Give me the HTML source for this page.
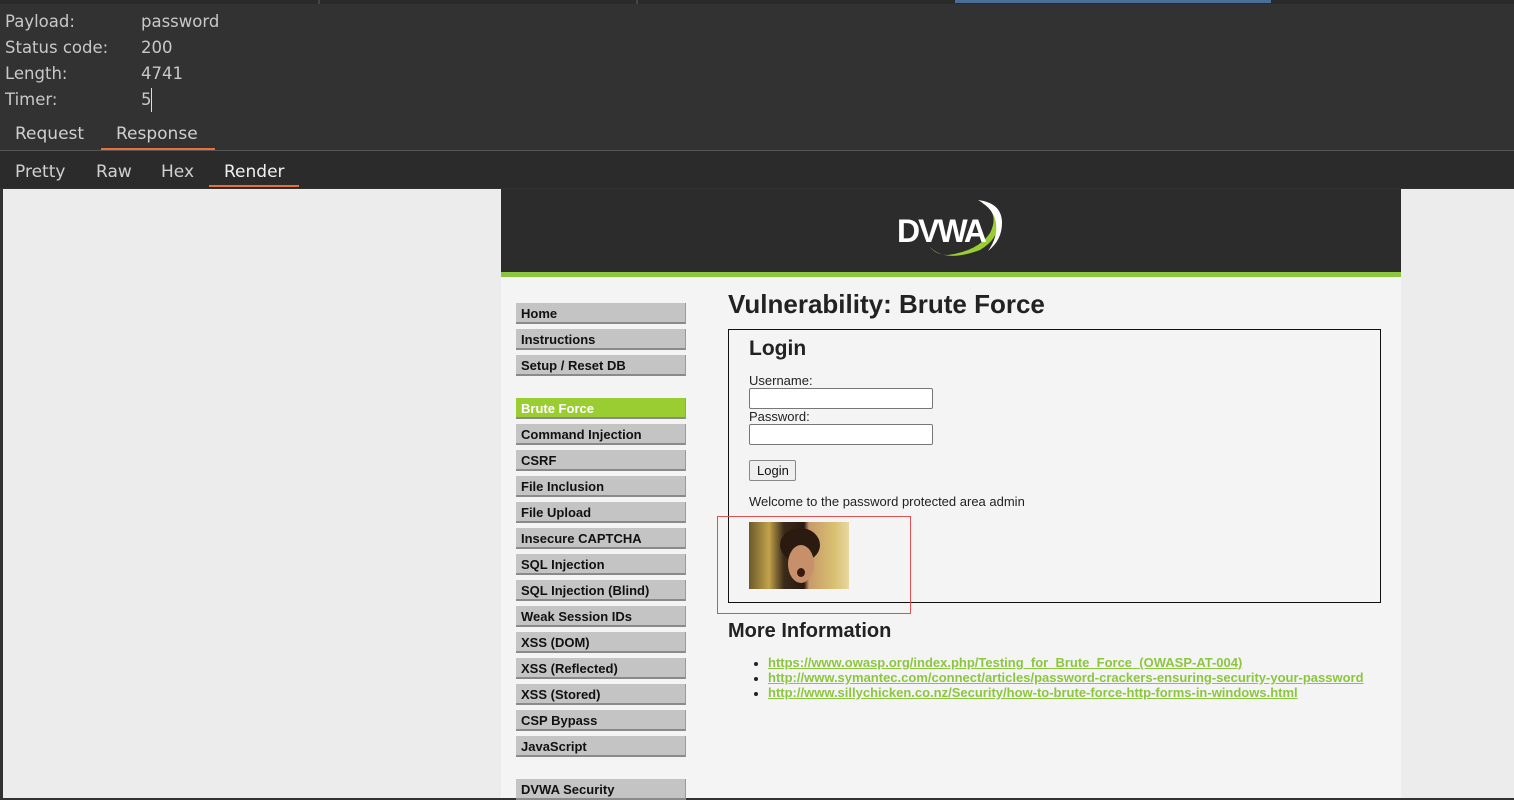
<!DOCTYPE html>
<html><head><style>
*{margin:0;padding:0;box-sizing:border-box}
body{width:1514px;height:798px;overflow:hidden;background:#323232;font-family:"DejaVu Sans","Liberation Sans",sans-serif;position:relative}
.a{position:absolute}
.lbl{color:#c8c8c8;font-size:16.5px;position:absolute}
.tab{position:absolute;color:#d0d0d0;font-size:17px}
.menu{position:absolute;left:516px;width:170px;height:21px;background:#c4c4c4;border-bottom:2px solid #8a8a8a;border-right:1px solid #999;font:bold 13px "Liberation Sans",sans-serif;color:#111;padding:3px 0 0 5px}
.ds{font-family:"Liberation Sans",sans-serif}
a{color:#8cc63f;font:bold 13px/15px "Liberation Sans",sans-serif;text-decoration:underline}
li{line-height:15px;height:15px}
input{position:absolute;height:21px;width:184px;border:1px solid #777;border-radius:2px;background:#fff}
</style></head><body>
<div class="a" style="left:0;top:0;width:1514px;height:4px;background:#2a2a2a"></div>
<div class="a" style="left:318px;top:0;width:2px;height:4px;background:#444"></div>
<div class="a" style="left:636px;top:0;width:2px;height:4px;background:#444"></div>
<div class="a" style="left:955px;top:0;width:316px;height:3px;background:#4a6f96"></div>
<div class="lbl" style="left:5px;top:12px">Payload:</div><div class="lbl" style="left:141px;top:12px">password</div>
<div class="lbl" style="left:5px;top:38px">Status code:</div><div class="lbl" style="left:141px;top:38px">200</div>
<div class="lbl" style="left:5px;top:64px">Length:</div><div class="lbl" style="left:141px;top:64px">4741</div>
<div class="lbl" style="left:5px;top:90px">Timer:</div><div class="lbl" style="left:141px;top:90px">5</div>
<div class="a" style="left:151px;top:88px;width:1px;height:24px;background:#ddd"></div>
<div class="tab" style="left:15px;top:124px">Request</div>
<div class="tab" style="left:116px;top:124px">Response</div>
<div class="a" style="left:101px;top:148px;width:114px;height:2px;background:#e8703a"></div>
<div class="a" style="left:0;top:150px;width:1514px;height:1px;background:#555"></div>
<div class="a" style="left:0;top:151px;width:1514px;height:37px;background:#2b2b2b"></div>
<div class="tab" style="left:15px;top:162px">Pretty</div>
<div class="tab" style="left:96px;top:162px">Raw</div>
<div class="tab" style="left:161px;top:162px">Hex</div>
<div class="tab" style="left:224px;top:162px;color:#f0f0f0">Render</div>
<div class="a" style="left:209px;top:185px;width:90px;height:2px;background:#e8703a"></div>
<div class="a" style="left:3px;top:189px;width:1511px;height:609px;background:#ececec"></div>
<div class="a" style="left:501px;top:189px;width:900px;height:609px;background:#f4f4f4"></div>
<div class="a" style="left:501px;top:189px;width:900px;height:83px;background:#2c2c2c"></div>
<div class="a" style="left:501px;top:272px;width:900px;height:5px;background:#8cc63f"></div>
<svg class="a" style="left:890px;top:195px" width="120" height="70">
<path d="M40 52 Q55 68 90 55 Q112 42 108 20 Q104 10 92 8 Q110 18 100 38 Q88 56 58 60 Q46 60 40 52 Z" fill="#9acd32"/>
<path d="M88 5 Q112 8 112 28 Q112 45 98 56 Q108 42 106 28 Q104 14 88 5 Z" fill="#fff"/>
<text x="7" y="47" font-family="Liberation Sans" font-weight="bold" font-size="32" fill="#fff" letter-spacing="-2">DVWA</text>
</svg>
<div class="menu" style="top:303px">Home</div>
<div class="menu" style="top:329px">Instructions</div>
<div class="menu" style="top:355px">Setup / Reset DB</div>
<div class="menu" style="top:398px;background:#9acd32;color:#fff">Brute Force</div>
<div class="menu" style="top:424px">Command Injection</div>
<div class="menu" style="top:450px">CSRF</div>
<div class="menu" style="top:476px">File Inclusion</div>
<div class="menu" style="top:502px">File Upload</div>
<div class="menu" style="top:528px">Insecure CAPTCHA</div>
<div class="menu" style="top:554px">SQL Injection</div>
<div class="menu" style="top:580px">SQL Injection (Blind)</div>
<div class="menu" style="top:606px">Weak Session IDs</div>
<div class="menu" style="top:632px">XSS (DOM)</div>
<div class="menu" style="top:658px">XSS (Reflected)</div>
<div class="menu" style="top:684px">XSS (Stored)</div>
<div class="menu" style="top:710px">CSP Bypass</div>
<div class="menu" style="top:736px">JavaScript</div>
<div class="menu" style="top:779px">DVWA Security</div>
<div class="a ds" style="left:728px;top:289px;font-size:26px;font-weight:bold;color:#222">Vulnerability: Brute Force</div>
<div class="a" style="left:728px;top:329px;width:653px;height:274px;border:1px solid #111"></div>
<div class="a ds" style="left:749px;top:337px;font-size:21px;font-weight:bold;color:#222">Login</div>
<div class="a ds" style="left:749px;top:373px;font-size:13px;color:#222">Username:</div>
<input style="left:749px;top:388px">
<div class="a ds" style="left:749px;top:409px;font-size:13px;color:#222">Password:</div>
<input style="left:749px;top:424px">
<div class="a ds" style="left:749px;top:460px;width:47px;height:21px;border:1px solid #888;border-radius:2px;background:#efefef;font-size:13px;padding:2px 0 0 7px;color:#111">Login</div>
<div class="a ds" style="left:749px;top:494px;font-size:13px;color:#222">Welcome to the password protected area admin</div>
<div class="a" style="left:749px;top:522px;width:100px;height:67px;background:linear-gradient(90deg,#6b5a2a 0%,#c2a24a 20%,#3a2a1a 35%,#2a1a10 55%,#c89a6a 60%,#d8c070 85%,#e8d8a0 100%)"></div>
<div class="a" style="left:780px;top:528px;width:40px;height:34px;border-radius:50%;background:#2a1a10"></div>
<div class="a" style="left:788px;top:545px;width:26px;height:38px;border-radius:50%;background:#c8906a"></div>
<div class="a" style="left:797px;top:568px;width:8px;height:9px;border-radius:50%;background:#3a1a10"></div>
<div class="a" style="left:717px;top:516px;width:194px;height:98px;border:1px solid #e05050"></div>
<div class="a ds" style="left:728px;top:620px;font-size:20px;font-weight:bold;color:#222">More Information</div>
<ul class="a" style="left:768px;top:655px;list-style:disc;color:#222;font-size:13px">
<li><a>https://www.owasp.org/index.php/Testing_for_Brute_Force_(OWASP-AT-004)</a></li>
<li><a>http://www.symantec.com/connect/articles/password-crackers-ensuring-security-your-password</a></li>
<li><a>http://www.sillychicken.co.nz/Security/how-to-brute-force-http-forms-in-windows.html</a></li>
</ul>
</body></html>
